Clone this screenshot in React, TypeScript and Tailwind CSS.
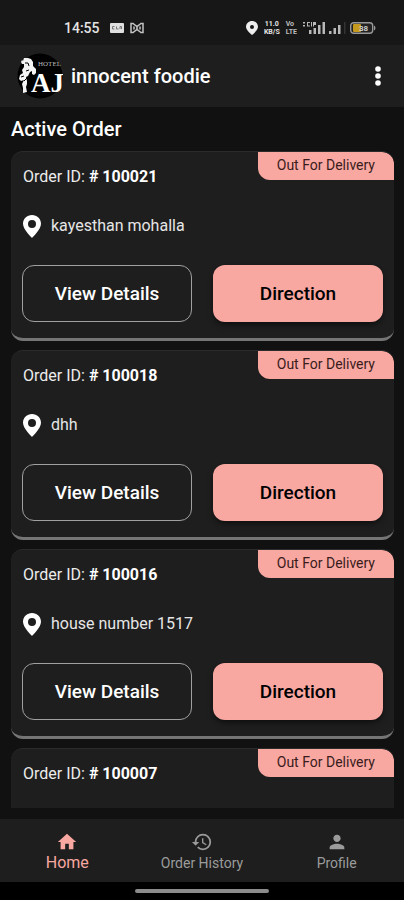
import { MdHistory, MdHome, MdPerson } from 'react-icons/md';
import { clsx } from 'clsx';

interface Order {
  id: string;
  status: string;
  address?: string;
}

const ORDERS: Order[] = [
  { id: '100021', status: 'Out For Delivery', address: 'kayesthan mohalla' },
  { id: '100018', status: 'Out For Delivery', address: 'dhh' },
  { id: '100016', status: 'Out For Delivery', address: 'house number 1517' },
  { id: '100007', status: 'Out For Delivery' },
];

const TABS = [
  { label: 'Home', icon: MdHome, active: true },
  { label: 'Order History', icon: MdHistory, active: false },
  { label: 'Profile', icon: MdPerson, active: false },
];

const PinIcon = ({ className }: { className?: string }) => (
  <svg viewBox="0 0 18 23" className={className} fill="currentColor" aria-hidden="true">
    <path
      fillRule="evenodd"
      d="M9 0C4 0 0 3.9 0 8.8 0 14.6 9 23 9 23s9-8.4 9-14.2C18 3.9 14 0 9 0Zm0 5a4 4 0 1 1 0 8 4 4 0 0 1 0-8Z"
    />
  </svg>
);

const StatusBar = () => (
  <div className="flex h-[45px] shrink-0 items-end justify-between bg-[#171717] pr-7 pb-[7px] pl-16 text-[#e4e4e4]">
    <div className="flex h-5 items-center gap-2.5">
      <span className="text-sm leading-5 font-medium">14:55</span>
      <div className="flex items-center gap-1.5">
        <svg viewBox="0 0 14 12" className="h-3 w-3.5" aria-hidden="true">
          <rect y="1" width="14" height="10" rx="1" fill="#e0e0e0" />
          <path d="M4.5 4.5h-2v2.5h2M6.5 4.5v2.5h2M10 7V4.500h1.500V7" stroke="#777" fill="none" />
        </svg>
        <svg viewBox="0 0 14 12" className="h-3 w-3.5" fill="none" stroke="#c4c4c4" strokeWidth="1.5" aria-hidden="true">
          <path d="M1 1.5v9h2l4-3 4 3h2v-9h-2l-4 3-4-3Z" />
          <path d="M4 4.5v3M10 4.5v3M6 6h2" />
        </svg>
      </div>
    </div>
    <div className="flex h-5 items-center">
      <svg viewBox="0 0 12 14" className="h-3.5 w-3" aria-hidden="true">
        <path
          fill="#eee"
          fillRule="evenodd"
          d="M6 0C2.7 0 0 2.6 0 5.8 0 9.5 6 14 6 14s6-4.5 6-8.2C12 2.6 9.3 0 6 0Zm0 4a2 2 0 1 1 0 4 2 2 0 0 1 0-4Z"
        />
      </svg>
      <span className="ml-1.5 flex flex-col text-center text-[7px] leading-[8px] font-bold">
        <span>11.0</span>
        <span>KB/S</span>
      </span>
      <span className="ml-1.5 flex flex-col text-[7px] leading-[8px] font-bold text-[#bdbdbd]">
        <span>Vo</span>
        <span>LTE</span>
      </span>
      <svg viewBox="0 0 22 12" className="ml-1.5 h-3 w-[22px]" fill="#b8b8b8" aria-hidden="true">
        <path d="M0 0h2v1.5H0zM0 3h2v1.5H0zM4 0h3v1H5v2.5h2v1H4zM8 0h1v4.5H8zM10 0h3v3h-2v1.5h-1z" />
        <path d="M6 8h2.5v4H6zM10.500 6H13v6h-2.5zM15 3h2.5v9H15zM19.500 0H22v12h-2.5z" />
      </svg>
      <svg viewBox="0 0 17 12" className="ml-1 h-3 w-[17px]" aria-hidden="true">
        <path fill="#b8b8b8" d="M0 9h2.5v3H0zM4.500 6H7v6H4.500zM9 3h2.5v9H9z" />
        <path fill="#333" d="M15 0h1.5v12H15z" />
      </svg>
      <svg viewBox="0 0 26 12" className="ml-1 h-3 w-[26px]" aria-hidden="true">
        <rect x="0.7" y="0.7" width="22" height="10.6" rx="3" fill="#222" stroke="#999" strokeWidth="1.4" />
        <path d="M24 3.5c2 1 2 4 0 5Z" fill="#999" />
        <rect x="3" y="2" width="8" height="8" rx="1" fill="#c69a1c" />
        <text x="9" y="9" fontSize="8" fontWeight="700" fill="#ccc" fontFamily="Roboto, sans-serif">38</text>
      </svg>
    </div>
  </div>
);

const Logo = () => (
  <svg viewBox="0 0 46 46" className="size-[46px]" aria-hidden="true">
    <circle cx="23" cy="23" r="22.5" fill="#000" />
    {/* rearing horse */}
    <path
      fill="#f4f4f4"
      d="M6 8 7 5l4 0 3 1 2 3 0 4 3 3 0 4-2 2-2-1 0-3-2 1-2 4-2 1 1 4 0 3-1 3 1 5-4 1 0-5-1-4 2-4-3 1-2-2 1-4 3-2-1-3 2-3 0-3-2 0-1-2 1-2Z"
    />
    <path d="M4 24l3-1M7 28l3-3M8 10l3 0 1 3M9 18l3-1" stroke="#000" fill="none" />
    <text x="21" y="13" fontSize="7" fill="#bbb" fontFamily="'Liberation Serif', serif">HOTEL</text>
    <text x="14" y="39" fontSize="27" fontWeight="700" fill="#fff" fontFamily="'Liberation Serif', serif">AJ</text>
  </svg>
);

const AppHeader = () => (
  <header className="flex h-[62px] shrink-0 items-center bg-[#1e1e1e] pr-2.5 pl-[17px]">
    <Logo />
    <h1 className="ml-2 flex-1 text-xl leading-6 font-medium text-white">innocent foodie</h1>
    <button type="button" aria-label="More options" className="flex h-8 w-8 items-center justify-center text-white">
      <svg viewBox="0 0 6 20" className="h-5 w-1.5" fill="currentColor" aria-hidden="true">
        <circle cx="3" cy="3" r="2.8" />
        <circle cx="3" cy="10" r="2.8" />
        <circle cx="3" cy="17" r="2.8" />
      </svg>
    </button>
  </header>
);

const OrderCard = ({ order }: { order: Order }) => (
  <li className="min-h-[190px] shrink-0 overflow-hidden rounded-xl border-t border-b-[3px] border-t-[#2b2b2b] border-b-[#757575] bg-[#1e1e1e] pb-4">
    <div className="flex items-start justify-between pl-3">
      <p className="pt-[15px] text-base leading-5 text-[#ececec]">
        Order ID: <span className="font-bold text-white"># {order.id}</span>
      </p>
      <span className="rounded-tr-xl rounded-bl-xl bg-[#f9a7a1] px-[19px] pt-[3px] pb-[5px] text-sm leading-5 text-[#3a1c1c]">
        {order.status}
      </span>
    </div>
    {order.address && (
      <>
        <div className="mt-[27px] flex items-center gap-2.5 px-3 text-white">
          <PinIcon className="h-[23px] w-[18px]" />
          <span className="text-base leading-6 text-[#e6e6e6]">{order.address}</span>
        </div>
        <div className="mt-[27px] grid grid-cols-2 gap-[21px] px-[11px]">
          <button
            type="button"
            className="h-[57px] rounded-xl border border-[#a0a0a0] text-[19px] leading-6 font-medium text-white"
          >
            View Details
          </button>
          <button
            type="button"
            className="h-[57px] rounded-xl bg-[#f9a7a1] text-[19px] leading-6 font-medium text-black shadow-md shadow-black/40"
          >
            Direction
          </button>
        </div>
      </>
    )}
  </li>
);

const BottomNav = () => (
  <nav className="grid h-[63px] shrink-0 grid-cols-3 bg-[#1e1e1e]">
    {TABS.map(({ label, icon: Icon, active }) => (
      <button
        key={label}
        type="button"
        className={clsx(
          'flex flex-col items-center pt-3',
          active ? 'text-base text-[#f9a7a1]' : 'text-sm text-[#9b9b9b]'
        )}
      >
        <Icon className="size-[22px]" />
        <span className="leading-5">{label}</span>
      </button>
    ))}
  </nav>
);

const App = () => (
  <div className="flex h-screen flex-col bg-[#111111] font-[Roboto,sans-serif]">
    <StatusBar />
    <AppHeader />
    <main className="mb-[11px] flex min-h-0 flex-1 flex-col overflow-hidden pt-2.5 pr-2.5 pl-[11px]">
      <h2 className="text-xl leading-6 font-medium text-white">Active Order</h2>
      <ul className="mt-2.5 flex min-h-0 flex-1 flex-col gap-[9px] overflow-hidden">
        {ORDERS.map((order) => (
          <OrderCard key={order.id} order={order} />
        ))}
      </ul>
    </main>
    <BottomNav />
    <div className="flex h-[18px] shrink-0 items-center justify-center bg-black">
      <div className="h-1 w-1/3 rounded-full bg-[#8c8c8c]" />
    </div>
  </div>
);

export default App;
